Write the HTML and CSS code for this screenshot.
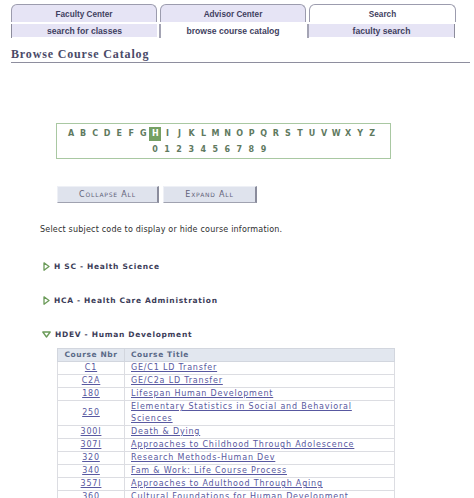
FILE: index.html
```html
<!DOCTYPE html>
<html>
<head>
<meta charset="utf-8">
<link rel="stylesheet" href="styles.css">
</head>
<body>
<div class="page">
  <div class="tabs">
    <div class="tab">Faculty Center</div>
    <div class="tab">Advisor Center</div>
    <div class="tab tab-active">Search</div>
  </div>
  <div class="subtabs">
    <div class="subtab">search for classes</div>
    <div class="subtab subtab-active">browse course catalog</div>
    <div class="subtab subtab-last">faculty search</div>
  </div>
  <h1 class="title">Browse Course Catalog</h1>

  <div class="alpha">
    <div class="alpha-row">
      <span>A</span><span>B</span><span>C</span><span>D</span><span>E</span><span>F</span><span>G</span><span class="sel">H</span><span>I</span><span>J</span><span>K</span><span>L</span><span>M</span><span>N</span><span>O</span><span>P</span><span>Q</span><span>R</span><span>S</span><span>T</span><span>U</span><span>V</span><span>W</span><span>X</span><span>Y</span><span>Z</span>
    </div>
    <div class="alpha-row digits">
      <span>0</span><span>1</span><span>2</span><span>3</span><span>4</span><span>5</span><span>6</span><span>7</span><span>8</span><span>9</span>
    </div>
  </div>

  <div class="buttons">
    <div class="btn btn-collapse">Collapse All</div>
    <div class="btn btn-expand">Expand All</div>
  </div>

  <p class="hint">Select subject code to display or hide course information.</p>

  <div class="subject">
    <svg class="tri" width="7" height="9" viewBox="0 0 7 9"><path d="M1 0.8 L6 4.5 L1 8.2 Z" fill="none" stroke="#6a9a58" stroke-width="1.3" stroke-linejoin="round"/></svg>
    <span>H SC - Health Science</span>
  </div>
  <div class="subject">
    <svg class="tri" width="7" height="9" viewBox="0 0 7 9"><path d="M1 0.8 L6 4.5 L1 8.2 Z" fill="none" stroke="#6a9a58" stroke-width="1.3" stroke-linejoin="round"/></svg>
    <span>HCA - Health Care Administration</span>
  </div>
  <div class="subject">
    <svg class="tri tri-down" width="9" height="7" viewBox="0 0 9 7"><path d="M0.8 1 L8.2 1 L4.5 6 Z" fill="none" stroke="#6a9a58" stroke-width="1.3" stroke-linejoin="round"/></svg>
    <span>HDEV - Human Development</span>
  </div>

  <table class="courses">
    <thead>
      <tr><th class="nbr">Course Nbr</th><th class="ttl">Course Title</th></tr>
    </thead>
    <tbody>
      <tr><td class="nbr"><a href="#">C1</a></td><td><a href="#">GE/C1 LD Transfer</a></td></tr>
      <tr><td class="nbr"><a href="#">C2A</a></td><td><a href="#">GE/C2a LD Transfer</a></td></tr>
      <tr><td class="nbr"><a href="#">180</a></td><td><a href="#">Lifespan Human Development</a></td></tr>
      <tr><td class="nbr"><a href="#">250</a></td><td><a href="#">Elementary Statistics in Social and Behavioral Sciences</a></td></tr>
      <tr><td class="nbr"><a href="#">300I</a></td><td><a href="#">Death &amp; Dying</a></td></tr>
      <tr><td class="nbr"><a href="#">307I</a></td><td><a href="#">Approaches to Childhood Through Adolescence</a></td></tr>
      <tr><td class="nbr"><a href="#">320</a></td><td><a href="#">Research Methods-Human Dev</a></td></tr>
      <tr><td class="nbr"><a href="#">340</a></td><td><a href="#">Fam &amp; Work: Life Course Process</a></td></tr>
      <tr><td class="nbr"><a href="#">357I</a></td><td><a href="#">Approaches to Adulthood Through Aging</a></td></tr>
      <tr><td class="nbr"><a href="#">360</a></td><td><a href="#">Cultural Foundations for Human Development</a></td></tr>
    </tbody>
  </table>
</div>
</body>
</html>
```

FILE: styles.css
```css
html, body {
  margin: 0;
  padding: 0;
  background: #ffffff;
}
body {
  font-family: "DejaVu Sans", Verdana, sans-serif;
  color: #333;
  overflow: hidden;
}
.page {
  padding: 4px 0 0 11px;
}

/* top tabs */
.tabs {
  display: flex;
  gap: 3px;
  height: 18px;
}
.tab {
  width: 146px;
  height: 18px;
  box-sizing: border-box;
  border: 1px solid #9c9cae;
  border-bottom: none;
  border-radius: 6px 6px 0 0;
  background: #e6e4f5;
  font-family: "Liberation Sans", Arial, sans-serif;
  font-weight: bold;
  font-size: 8.2px;
  color: #3f3f5f;
  display: flex;
  align-items: center;
  justify-content: center;
  padding-top: 1px;
}
.tab-active {
  background: #ffffff;
  width: 147px;
}

/* sub tabs */
.subtabs {
  display: flex;
  margin-top: 2px;
  height: 14px;
  width: 446px;
}
.subtab {
  flex: 0 0 148px;
  box-sizing: border-box;
  border-left: 1px solid #8c8c9c;
  background: #e6e4f5;
  background-clip: content-box;
  padding-right: 2px;
  font-family: "Liberation Sans", Arial, sans-serif;
  font-weight: bold;
  font-size: 8.6px;
  color: #3f3f5f;
  display: flex;
  align-items: center;
  justify-content: center;
  padding-bottom: 1px;
}
.subtab-active {
  background: #ffffff;
  border-left: 2px solid #a4a4b4;
}
.subtab-last {
  border-left: 2px solid #a4a4b4;
  border-right: 1px solid #8c8c9c;
  padding-right: 0;
}

/* title */
.title {
  margin: 9px 0 0 0;
  width: 459px;
  padding: 0 0 1px 0;
  line-height: 14px;
  font-family: "Liberation Serif", "Times New Roman", serif;
  font-weight: bold;
  font-size: 12px;
  letter-spacing: 0.85px;
  color: #4a4a68;
  border-bottom: 1px solid #8e8e9e;
}

/* alphabet */
.alpha {
  margin: 60px 0 0 45px;
  width: 335px;
  height: 36px;
  box-sizing: border-box;
  border: 1px solid #a9c8a2;
  padding: 4px 0 0 8px;
  display: flex;
  flex-direction: column;
  gap: 4px;
}
.alpha-row {
  display: flex;
  height: 12px;
}
.alpha-row span {
  width: 12.05px;
  text-align: center;
  font-family: "DejaVu Sans", Verdana, sans-serif;
  font-weight: bold;
  font-size: 8px;
  line-height: 12px;
  color: #5f7a5f;
}
.alpha-row span.sel {
  background: #75a064;
  color: #ffffff;
  height: 14px;
  line-height: 14px;
  margin-top: -1px;
}
.digits {
  padding-left: 84px;
}

/* buttons */
.buttons {
  display: flex;
  gap: 4px;
  margin: 27px 0 0 46px;
}
.btn {
  height: 17px;
  box-sizing: border-box;
  background: #dfe3ed;
  border-top: 1px solid #eef0f6;
  border-left: 1px solid #eef0f6;
  border-right: 2px solid #8a8c9c;
  border-bottom: 1px solid #a0a2b0;
  font-family: "DejaVu Sans", Verdana, sans-serif;
  font-size: 8px;
  font-variant: small-caps;
  letter-spacing: 0.8px;
  color: #62627a;
  display: flex;
  align-items: center;
  justify-content: center;
}
.btn-collapse { width: 102px; }
.btn-expand { width: 94px; }

/* hint */
.hint {
  margin: 21px 0 0 29px;
  font-size: 8px;
  letter-spacing: 0.2px;
  line-height: 12px;
  color: #2e2e2e;
}

/* subjects */
.subject {
  display: flex;
  align-items: center;
  gap: 4px;
  margin: 24px 0 0 32px;
  height: 12px;
  font-weight: bold;
  font-size: 7.5px;
  letter-spacing: 0.7px;
  color: #3c3c58;
}
.subject + .subject {
  margin-top: 22px;
}
.tri {
  flex: 0 0 auto;
}
.tri-down {
  margin-left: -1px;
}

/* table */
.courses {
  margin: 8px 0 0 46px;
  width: 338px;
  border-collapse: collapse;
  border: 1px solid #c9ccd6;
  font-size: 8px;
  letter-spacing: 0.8px;
}
.courses th {
  background: #e2e7ef;
  color: #5a6a88;
  font-weight: bold;
  font-size: 7.5px;
  letter-spacing: 0.6px;
  text-align: left;
  height: 12px;
  padding: 0 0 0 6px;
  line-height: 12px;
  border: 1px solid #d2d6de;
}
.courses th.nbr {
  text-align: center;
  padding: 0;
  width: 66px;
}
.courses td {
  border: 1px solid #dcdde2;
  padding: 0 0 0 6px;
  line-height: 12px;
  height: 12px;
  vertical-align: middle;
}
.courses td.nbr {
  text-align: center;
  padding: 0;
}
.courses a {
  color: #5858a0;
  text-decoration: underline;
}
```
